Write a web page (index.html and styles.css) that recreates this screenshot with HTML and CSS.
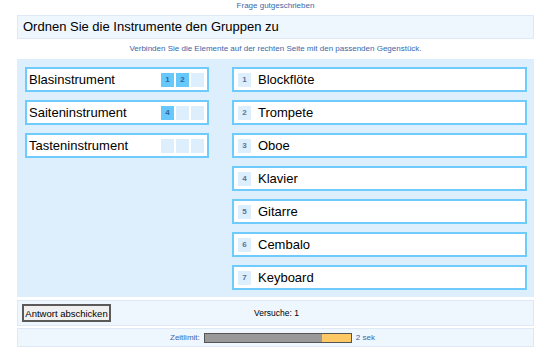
FILE: index.html
```html
<!DOCTYPE html>
<html>
<head>
  <title>Zuordnung</title>
  <link rel="stylesheet" href="styles.css">
</head>
<body>
  <div class="quiz">
    <div class="status">Frage gutgeschrieben</div>
    <div class="title">Ordnen Sie die Instrumente den Gruppen zu</div>
    <div class="hint">Verbinden Sie die Elemente auf der rechten Seite mit den passenden Gegenstück.</div>

    <div class="board">
      <div class="groups">
        <div class="group">
          <span>Blasinstrument</span>
          <div class="slots">
            <span class="slot filled">1</span>
            <span class="slot filled">2</span>
            <span class="slot"></span>
          </div>
        </div>
        <div class="group">
          <span>Saiteninstrument</span>
          <div class="slots">
            <span class="slot filled">4</span>
            <span class="slot"></span>
            <span class="slot"></span>
          </div>
        </div>
        <div class="group">
          <span>Tasteninstrument</span>
          <div class="slots">
            <span class="slot"></span>
            <span class="slot"></span>
            <span class="slot"></span>
          </div>
        </div>
      </div>

      <div class="items">
        <div class="item"><span class="num">1</span>Blockflöte</div>
        <div class="item"><span class="num">2</span>Trompete</div>
        <div class="item"><span class="num">3</span>Oboe</div>
        <div class="item"><span class="num">4</span>Klavier</div>
        <div class="item"><span class="num">5</span>Gitarre</div>
        <div class="item"><span class="num">6</span>Cembalo</div>
        <div class="item"><span class="num">7</span>Keyboard</div>
      </div>
    </div>

    <div class="actions">
      <button class="submit">Antwort abschicken</button>
      <div class="tries">Versuche: 1</div>
    </div>

    <div class="timer">
      <span class="label">Zeitlimit:</span>
      <div class="bar"><div class="used" style="width: 80%"></div></div>
      <span class="label">2 sek</span>
    </div>
  </div>
</body>
</html>
```

FILE: styles.css
```css
body {
  margin: 0;
  background: #fff;
  font-family: "Liberation Sans", Arial, sans-serif;
  color: #000;
}
.quiz {
  width: 517px;
  margin-left: 17px;
}
.status {
  height: 15px;
  line-height: 12px;
  text-align: center;
  font-size: 8px;
  color: #3a67a8;
}
.title {
  height: 22px;
  line-height: 22px;
  background: #eef6fe;
  border: 1px solid #dde9f7;
  padding-left: 5px;
  font-size: 13px;
}
.hint {
  height: 20px;
  line-height: 19px;
  text-align: center;
  font-size: 8px;
  color: #3a67a8;
}
.board {
  background: #ddeefd;
  display: flex;
  gap: 23px;
  padding: 8px 7px 7px 8px;
}
.groups, .items {
  display: flex;
  flex-direction: column;
  gap: 8px;
}
.groups {
  width: 184px;
}
.items {
  flex: 1;
}
.group, .item {
  height: 21px;
  background: #fff;
  border: 2px solid #70cbfd;
  display: flex;
  align-items: center;
  font-size: 13px;
}
.group {
  justify-content: space-between;
  padding: 0 3px 0 2px;
}
.slots {
  display: flex;
  gap: 2px;
}
.slot {
  width: 13px;
  height: 14px;
  background: #ddeefd;
  color: #336699;
  font-size: 8px;
  font-weight: bold;
  line-height: 14px;
  text-align: center;
}
.slot.filled {
  background: #66c8fb;
}
.item {
  padding-left: 4px;
}
.num {
  width: 13px;
  height: 14px;
  line-height: 14px;
  margin-right: 7px;
  background: #ddeefd;
  color: #5a7496;
  font-size: 8px;
  font-weight: bold;
  text-align: center;
}
.actions {
  margin-top: 3px;
  height: 24px;
  background: #eef6fe;
  border: 1px solid #dde9f7;
  display: flex;
  align-items: center;
  padding-left: 4px;
}
.submit {
  width: 89px;
  height: 18px;
  padding: 0;
  background: #f0f0f0;
  border: 2px solid #5a5a5a;
  font-family: "Liberation Sans", Arial, sans-serif;
  font-size: 9.5px;
  white-space: nowrap;
  color: #000;
}
.tries {
  margin-left: 143px;
  font-size: 8.5px;
}
.timer {
  margin-top: 2px;
  height: 17px;
  background: #eef6fe;
  border: 1px solid #dde9f7;
  display: flex;
  align-items: center;
  gap: 4px;
  padding-left: 152px;
}
.label {
  font-size: 8px;
  color: #3a67a8;
}
.bar {
  width: 146px;
  height: 8px;
  background: #fec964;
  border: 1px solid #555;
}
.used {
  height: 100%;
  background: #999;
}
```
